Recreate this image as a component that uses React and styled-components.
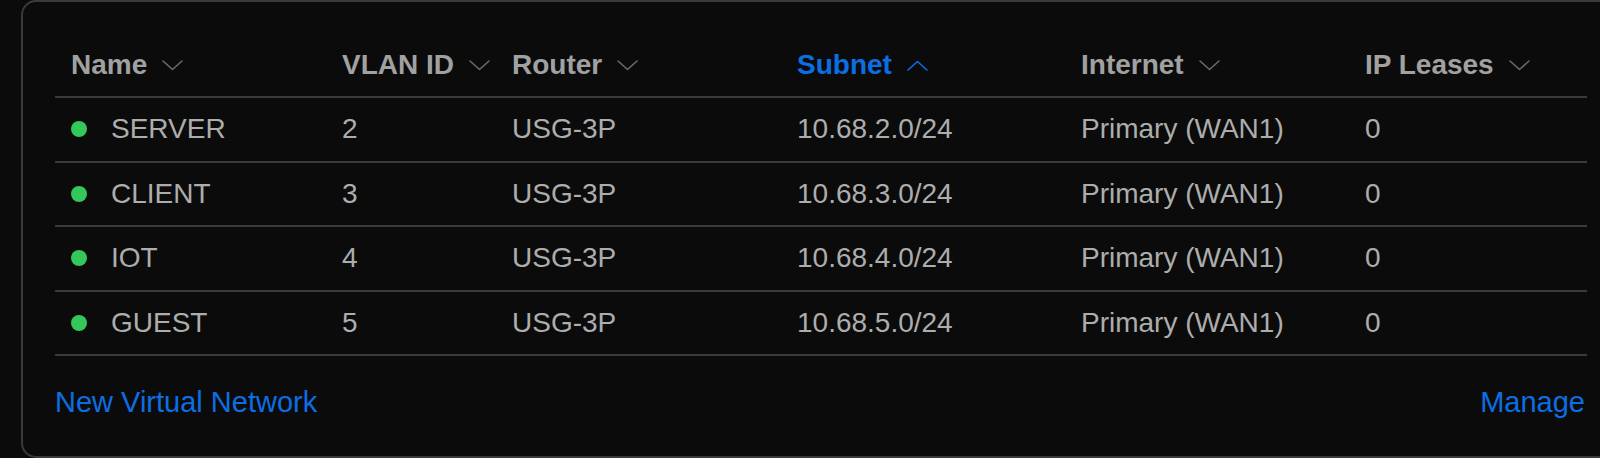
import styled, { createGlobalStyle } from "styled-components";

const GlobalStyle = createGlobalStyle`
  html, body {
    margin: 0;
    padding: 0;
    background: #0b0b0b;
    overflow: hidden;
  }
  body {
    font-family: "Liberation Sans", Arial, sans-serif;
  }
`;

const Card = styled.div`
  box-sizing: border-box;
  width: 1600px;
  height: 458px;
  margin-left: 21px;
  padding: 32px 32px 36px 32px;
  border: 2px solid #3a3a3c;
  border-radius: 15px;
  background: #0b0b0b;
`;

const Row = styled.div`
  display: grid;
  grid-template-columns: 271px 170px 285px 284px 284px 1fr;
  align-items: center;
  height: ${(p) => (p.$head ? "64px" : "64.5px")};
  box-sizing: border-box;
  border-bottom: 2px solid #3a3a3c;
`;

const HeadCell = styled.div`
  display: flex;
  align-items: center;
  gap: 15px;
  padding-left: 16px;
  font-size: 28px;
  font-weight: 700;
  color: ${(p) => (p.$active ? "#0b6fe3" : "#a1a1a1")};
`;

const Cell = styled.div`
  display: flex;
  align-items: center;
  gap: 24px;
  padding-left: 16px;
  font-size: 28px;
  color: #adadad;
`;

const Dot = styled.span`
  width: 16px;
  height: 16px;
  border-radius: 50%;
  background: #34c759;
`;

const Footer = styled.div`
  display: flex;
  justify-content: space-between;
  padding-top: 30px;
  padding-right: 2px;
  line-height: 32px;
`;

const Link = styled.a`
  font-size: 29px;
  color: #0b6fe3;
  text-decoration: none;
  cursor: pointer;
`;

function Chevron({ up, color }) {
  return (
    <svg width="21" height="11" viewBox="0 0 21 11" fill="none">
      <polyline
        points={up ? "1,10 10.5,1.5 20,10" : "1,1 10.5,9.5 20,1"}
        stroke={color}
        strokeWidth="1.6"
        strokeLinecap="round"
        strokeLinejoin="round"
      />
    </svg>
  );
}

const columns = [
  { label: "Name" },
  { label: "VLAN ID" },
  { label: "Router" },
  { label: "Subnet", active: true },
  { label: "Internet" },
  { label: "IP Leases" },
];

const networks = [
  { name: "SERVER", vlan: 2, subnet: "10.68.2.0/24" },
  { name: "CLIENT", vlan: 3, subnet: "10.68.3.0/24" },
  { name: "IOT", vlan: 4, subnet: "10.68.4.0/24" },
  { name: "GUEST", vlan: 5, subnet: "10.68.5.0/24" },
];

export default function App() {
  return (
    <>
      <GlobalStyle />
      <Card>
        <Row $head>
          {columns.map((c) => (
            <HeadCell key={c.label} $active={c.active}>
              {c.label}
              <Chevron up={c.active} color={c.active ? "#0b6fe3" : "#6a6a6a"} />
            </HeadCell>
          ))}
        </Row>
        {networks.map((n) => (
          <Row key={n.name}>
            <Cell>
              <Dot />
              {n.name}
            </Cell>
            <Cell>{n.vlan}</Cell>
            <Cell>USG-3P</Cell>
            <Cell>{n.subnet}</Cell>
            <Cell>Primary (WAN1)</Cell>
            <Cell>0</Cell>
          </Row>
        ))}
        <Footer>
          <Link>New Virtual Network</Link>
          <Link>Manage</Link>
        </Footer>
      </Card>
    </>
  );
}
